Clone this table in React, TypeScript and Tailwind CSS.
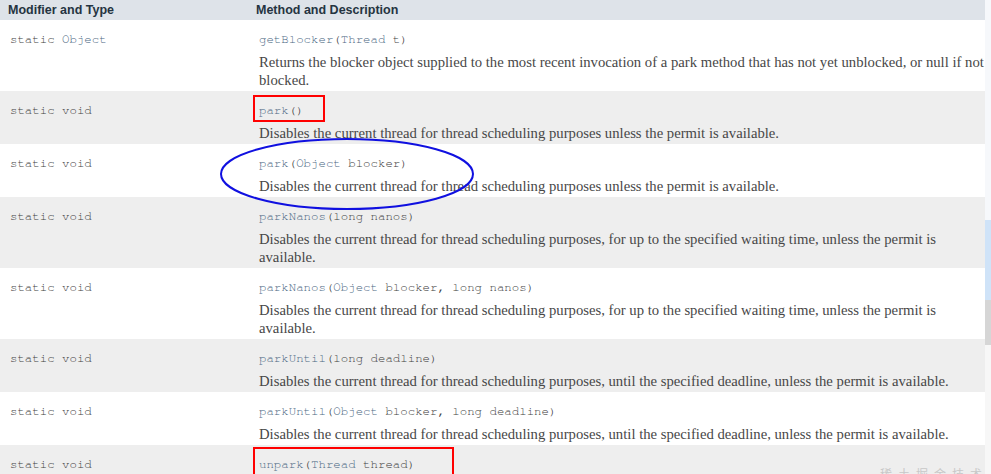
import React from "react";

type Part = { t: string; link?: boolean };

interface Row {
  type: Part[];
  sig: Part[];
  desc?: string;
}

const L = (t: string): Part => ({ t, link: true });
const P = (t: string): Part => ({ t });

const DESC_PARK = "Disables the current thread for thread scheduling purposes unless the permit is available.";
const DESC_NANOS =
  "Disables the current thread for thread scheduling purposes, for up to the specified waiting time, unless the permit is available.";
const DESC_UNTIL =
  "Disables the current thread for thread scheduling purposes, until the specified deadline, unless the permit is available.";

const rows: Row[] = [
  {
    type: [P("static "), L("Object")],
    sig: [L("getBlocker"), P("("), L("Thread"), P(" t)")],
    desc: "Returns the blocker object supplied to the most recent invocation of a park method that has not yet unblocked, or null if not blocked.",
  },
  { type: [P("static void")], sig: [L("park"), P("()")], desc: DESC_PARK },
  { type: [P("static void")], sig: [L("park"), P("("), L("Object"), P(" blocker)")], desc: DESC_PARK },
  { type: [P("static void")], sig: [L("parkNanos"), P("(long nanos)")], desc: DESC_NANOS },
  {
    type: [P("static void")],
    sig: [L("parkNanos"), P("("), L("Object"), P(" blocker, long nanos)")],
    desc: DESC_NANOS,
  },
  { type: [P("static void")], sig: [L("parkUntil"), P("(long deadline)")], desc: DESC_UNTIL },
  {
    type: [P("static void")],
    sig: [L("parkUntil"), P("("), L("Object"), P(" blocker, long deadline)")],
    desc: DESC_UNTIL,
  },
  { type: [P("static void")], sig: [L("unpark"), P("("), L("Thread"), P(" thread)")] },
];

const Code: React.FC<{ parts: Part[] }> = ({ parts }) => (
  <div className="font-['Nimbus_Mono_PS','FreeMono','Courier_New','Liberation_Mono',monospace] text-[12.4px] leading-[16px] whitespace-pre text-[#3d3d3d]">
    {parts.map((p, i) => (
      <span key={i} className={p.link ? "text-[#4a6782]" : ""}>
        {p.t}
      </span>
    ))}
  </div>
);

export default function App() {
  return (
    <div className="relative w-[991px] h-[474px] overflow-hidden bg-white flex">
      <div className="w-[985px] shrink-0 flex flex-col">
        {/* header */}
        <div className="flex h-[22px] items-center bg-[#dee3e9] font-['Liberation_Sans',Arial,sans-serif] text-[12.5px] font-bold text-[#253441]">
          <div className="w-[248px] pl-[8px]">Modifier and Type</div>
          <div className="flex-1 pl-[8px]">Method and Description</div>
        </div>

        {rows.map((r, i) => (
          <div key={i} className={`flex pt-[11px] pb-[2px] ${i % 2 === 0 ? "bg-white" : "bg-[#eeeeee]"}`}>
            <div className="w-[248px] shrink-0 pl-[10px]">
              <Code parts={r.type} />
            </div>
            <div className="flex-1 pl-[11px]">
              <Code parts={r.sig} />
              {r.desc && (
                <div className="mt-[6px] font-['Liberation_Serif',serif] text-[14.7px] leading-[18px] text-[#474747]">
                  {r.desc}
                </div>
              )}
            </div>
          </div>
        ))}
      </div>

      {/* strip of the window behind */}
      <div className="flex-1 flex flex-col">
        <div className="h-[220px] bg-[#f6f8fb]" />
        <div className="h-[80px] bg-[#cfe3f8]" />
        <div className="h-[45px] bg-[#d6d6d6]" />
        <div className="flex-1 bg-[#f7f7f7]" />
      </div>

      {/* annotations */}
      <div className="absolute left-[253px] top-[95px] w-[72px] h-[27px] border-2 border-[#ff0000]" />
      <div className="absolute left-[253px] top-[447px] w-[201px] h-[40px] border-2 border-[#ff0000]" />
      <svg className="absolute left-0 top-0 pointer-events-none" width="991" height="474">
        <ellipse cx="347" cy="174" rx="126" ry="35" fill="none" stroke="#1010e0" strokeWidth="2" />
      </svg>

      <div className="absolute left-[880px] top-[466px] text-[12px] leading-[16px] text-[#c8c8c8] font-['Noto_Sans_CJK_SC',sans-serif] tracking-[6px]">
        稀土掘金技术社区
      </div>
    </div>
  );
}
